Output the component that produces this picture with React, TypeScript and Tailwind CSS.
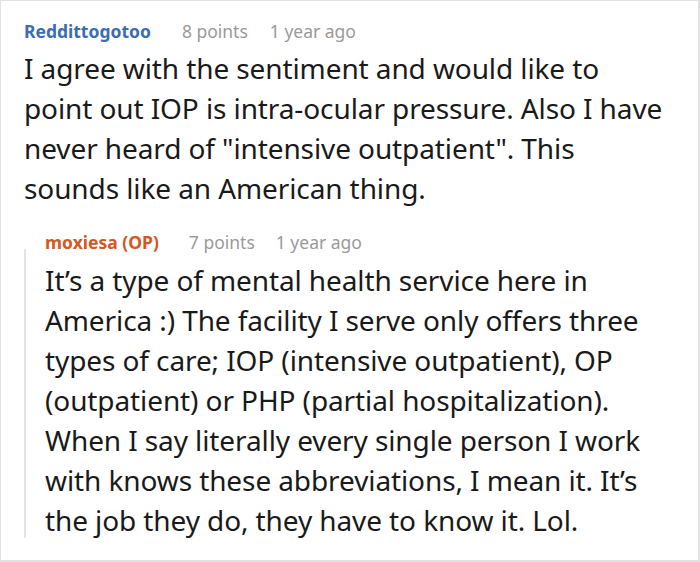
import React from 'react';

const App: React.FC = () => {
  return (
    <div className="w-[700px] h-[562px] bg-white overflow-hidden" style={{ fontFamily: '"Noto Sans", sans-serif' }}>
      <div className="h-[562px] border border-[#e2e2e2] border-r-2 border-b-2 pl-[23px] pr-[10px] pt-[17px]">
        <div className="flex items-baseline text-[17.5px] leading-[26px]">
          <span className="font-bold text-[#3b6cb4]">Reddittogotoo</span>
          <span className="text-[#9a9a9a] ml-[31px]">8 points</span>
          <span className="text-[#9a9a9a] ml-[22px]">1 year ago</span>
        </div>
        <p className="w-[645px] text-[28px] leading-[40px] text-[#1a1a1a] mt-[4px] tracking-[-0.1px]">
          I agree with the sentiment and would like to point out IOP is intra-ocular pressure. Also I have never heard of "intensive outpatient". This sounds like an American thing.
        </p>
        <div className="flex mt-[21px]">
          <div className="w-[2px] bg-[#e4e4e4] mt-[20px] mb-[2px] shrink-0" />
          <div className="pl-[19px]">
            <div className="flex items-baseline text-[17.5px] leading-[26px]">
              <span className="font-bold text-[#d4581f]">moxiesa (OP)</span>
              <span className="text-[#9a9a9a] ml-[30px]">7 points</span>
              <span className="text-[#9a9a9a] ml-[21px]">1 year ago</span>
            </div>
            <p className="w-[612px] text-[28px] leading-[40px] text-[#1a1a1a] mt-[5px] tracking-[-0.1px]">
              It’s a type of mental health service here in America :) The facility I serve only offers three types of care; IOP (intensive outpatient), OP (outpatient) or PHP (partial hospitalization). When I say literally every single person I work with knows these abbreviations, I mean it. It’s the job they do, they have to know it. Lol.
            </p>
          </div>
        </div>
      </div>
    </div>
  );
};

export default App;
